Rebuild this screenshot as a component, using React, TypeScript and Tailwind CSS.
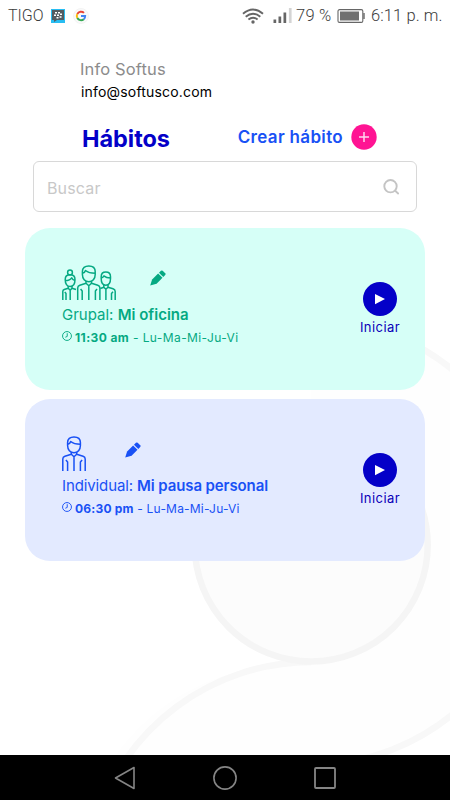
import React from "react";

const PersonIcon = ({ className }: { className: string }) => {
  return (
    <svg className={className} viewBox="0 0 24 35" fill="none" stroke="currentColor" strokeWidth="1.5" strokeLinejoin="round">
      <path d="M5.600 9.500V6.600C5.600 3 8 .9 12 .9s6.400 2.200 6.400 5.700v2.900c0 4.200-2.600 7.300-6.400 7.300s-6.400-3.100-6.400-7.300Z" />
      <path d="M5.600 8.200c1.700-.3 2.700-1.100 3.100-2.700 2.400 2 6 2.700 9.700 2.700" />
      <path d="M9.300 16.200v2L2.900 20.200Q.8 20.900.8 23v12M14.700 16.200v2l6.400 2q2.100.7 2.100 2.800v12M5.600 35V26l-1.700-2M18.400 35V26l1.700-2" />
      <path d="m9.300 18.200 2.700 2.500 2.700-2.500M12 20.700V35" />
    </svg>
  );
};

const GroupIcon = () => {
  return (
    <svg className="h-[35px] w-[54px]" viewBox="0 0 54 35" fill="none" stroke="currentColor" strokeWidth="1.5" strokeLinejoin="round">
      <circle cx="8" cy="7.500" r="2.400" />
      <path d="M3.200 14.500c0-3 1.900-4.700 4.900-4.700s4.900 1.700 4.900 4.700c0 4.300-1.800 7-4.900 7s-4.900-2.700-4.900-7ZM3.200 15.500c3.800 0 5.500-1 6.500-2.700.6 1.600 1.700 2.400 3.300 2.700" />
      <path d="M6.200 21.200v2l-4 1.300Q.8 25 .8 26.500V35M10 21.200v2l4 1.300M6.200 23.200l2 2 1.800-2M8.200 25.500V35M4 35v-6.500L2.800 27" />
      <path d="M20.400 9.500V6.600c0-3.600 2.400-5.700 6.400-5.700s6.400 2.200 6.400 5.700v2.900c0 4.200-2.600 7.300-6.400 7.300s-6.400-3.100-6.400-7.300ZM20.400 8.200c1.700-.3 2.700-1.100 3.100-2.700 2.400 2 6 2.700 9.700 2.700" />
      <path d="M24 16.200v2l-6.200 2q-2.100.7-2.100 2.800v12M29.500 16.200v2l6.300 2q2.100.7 2.100 2.800v12M20.200 35v-9l-1.600-2M33.400 35v-9l1.600-2M24 18.200l2.800 2.500 2.700-2.500M26.800 20.700V35" />
      <path d="M39.200 13.500v-1.800c0-3.200 1.700-4.700 4.600-4.700s4.700 1.500 4.700 4.700v1.800c0 4-1.800 6.700-4.700 6.700s-4.600-2.700-4.600-6.700ZM39.200 13c1.500-.3 2.300-1 2.600-2.100 1.800 1.500 4 2.100 6.700 2.100" />
      <path d="M41.800 20v2.200l-3.500 1.300M46 20v2.200l5 1.600q2.200.7 2.200 2.700V35M41.800 22.200l2.100 2 2.100-2M43.900 24.500V35M49.500 35v-6.500l1.500-1.700" />
    </svg>
  );
};

const PencilIcon = () => {
  return (
    <svg className="h-4 w-4" viewBox="0 0 16 16" fill="currentColor">
      <path d="m.2 15.600 1.900-6.200 6-6 4.400 4.400-5.900 6-6.400 1.800Z" />
      <path d="M9 2.700 10.900.8q.9-.8 1.800 0l2.500 2.500q.8.900 0 1.800L13.300 7 9 2.700Z" />
    </svg>
  );
};

const ClockIcon = () => {
  return (
    <svg className="h-[10px] w-[10px]" viewBox="0 0 9 9" fill="none" stroke="currentColor" strokeWidth=".85">
      <circle cx="4.500" cy="4.500" r="4" />
      <path d="M4.700 2v2.900L3 5.600" />
    </svg>
  );
};

const StartButton = () => {
  return (
    <button className="flex w-10 flex-col items-center text-[#0b00b9]">
      <svg className="h-[34px] w-[34px]" viewBox="0 0 34 34">
        <circle cx="17" cy="17" r="17" fill="#0400c8" />
        <path d="M12 12v10.300L22 17.100Z" fill="#fff" />
      </svg>
      <span className="mt-[2px] text-[13px] leading-[18px] tracking-[0.45px]">Iniciar</span>
    </button>
  );
};

const StatusBar = () => {
  return (
    <header className="flex h-8 items-center pl-2 font-['Roboto'] text-[16.500px] font-light text-[#3c3c3c]">
      <span className="w-[43px] text-[16px]">TIGO</span>
      <svg className="h-[14px] w-[14px]" viewBox="0 0 14 14">
        <path d="M0 0h14v14H0z" fill="#28bdf2" />
        <path d="M1 1h12v10H6l-3 2v-2H1z" fill="#555b60" />
        <path d="M4 3h2v1.500H4zM7 3h2v1.500H7zM3 5.500h2V7H3zM6 5.500h2V7H6zM9 4.500h2V6H9zM5.500 8h2v1.500h-2zM8.500 7.300h2v1.500h-2z" fill="#fff" />
      </svg>
      <svg className="ml-2 h-4 w-4" viewBox="0 0 16 16" fill="none" strokeWidth="1.900">
        <circle cx="8" cy="8" r="7.500" fill="#fafafa" stroke="#ececec" strokeWidth=".6" />
        <path d="M11 4.900A4.200 4.200 0 0 0 4.300 6" stroke="#e94335" />
        <path d="M4.300 6a4.200 4.200 0 0 0 0 4" stroke="#fbbc05" />
        <path d="M4.300 10a4.200 4.200 0 0 0 6.500 1.200" stroke="#34a853" />
        <path d="M10.800 11.200A4.200 4.200 0 0 0 12.200 8H8" stroke="#4285f4" />
      </svg>
      <svg className="ml-[153px] h-4 w-[22px]" viewBox="0 0 22 16" fill="none" stroke="#666" strokeWidth="1.900">
        <path d="M1 5.800Q11-2.800 21 5.800M3.700 8.700q7.300-6 14.600 0M6.400 11.500q4.600-3.600 9.200 0" />
        <circle cx="11" cy="14" r="1.700" fill="#666" stroke="none" />
      </svg>
      <svg className="ml-[9px] h-4 w-5" viewBox="0 0 20 16" fill="#666">
        <path d="M.500 11.500h2.700V15H.500zM5.500 8.500h2.700V15H5.500zM10.500 4.500h2.700V15h-2.700z" />
        <path d="M15.900 0h2.700v15h-2.700z" fill="#d4d4d4" />
      </svg>
      <span className="ml-[3px] w-[41px] whitespace-nowrap tracking-[0.25px]">79 %</span>
      <svg className="h-[14px] w-[28px]" viewBox="0 0 28 14" fill="none">
        <rect x="1" y=".6" width="24.800" height="12.800" rx="1.500" stroke="#666" strokeWidth="1.100" />
        <path d="M3 2.500h19v9H3z" fill="#707070" />
        <path d="M27 4v6" stroke="#666" strokeWidth="1.400" />
      </svg>
      <span className="ml-[6px] whitespace-nowrap tracking-[0.1px]">6:11 p. m.</span>
    </header>
  );
};

const App = () => {
  return (
    <div className="relative flex h-[800px] w-[450px] flex-col overflow-hidden bg-white font-['Inter',sans-serif]">
      <svg className="absolute inset-0 h-[800px] w-[450px]" viewBox="0 0 450 800" fill="none" strokeWidth="6.500">
        <path d="M311 319A223 223 0 0 1 311 765L90 800C130 710 210 662 311 662Z" fill="#fefefe" />
        <path d="M311 319a223 223 0 0 1 0 446M311 662A226 226 0 0 0 95 823" stroke="#f8f8f8" />
        <circle cx="311.200" cy="545" r="116.500" fill="#fcfcfc" stroke="#f5f5f5" />
      </svg>

      <div className="relative flex grow flex-col">
        <StatusBar />

        <section className="ml-20 mt-[26px]">
          <p className="text-[16.500px] leading-[22px] tracking-[0.15px] text-[#8c8c8c]">Info Softus</p>
          <p className="ml-[1px] mt-[2px] text-[14px] leading-5 tracking-[0.18px] text-black">info@softusco.com</p>
        </section>

        <div className="ml-[82px] mr-[73px] mt-[21px] flex h-[28px] items-center justify-between">
          <h1 className="mt-[3px] text-[23.500px] font-bold tracking-[-0.05px] text-[#0400c8]">Hábitos</h1>
          <button className="flex items-center gap-2 text-[17px] font-semibold text-[#1951f5]">
            <span className="mt-[2px] tracking-[0.33px]">Crear hábito</span>
            <svg className="h-[26px] w-[26px]" viewBox="0 0 26 26">
              <circle cx="13" cy="13" r="12.700" fill="#ff1493" />
              <path d="M13 8v10M8 13h10" stroke="#ffd5ee" strokeWidth="1.500" />
            </svg>
          </button>
        </div>

        <div className="mx-[33px] mt-[10px] flex h-[51px] items-center justify-between rounded-md border border-[#d8d8d8] bg-white pl-[13px] pr-[17px] text-[16px] text-[#c8c8c8]">
          <span className="mt-[2px] tracking-[0.15px]">Buscar</span>
          <svg className="h-4 w-4" viewBox="0 0 16 16" fill="none" stroke="#c4c4c4" strokeWidth="1.900">
            <circle cx="7.500" cy="7.200" r="6.200" />
            <path d="m11.700 11.300 4 3.700" />
          </svg>
        </div>

        <section className="mx-[25px] mt-4 flex h-[162px] rounded-[25px] bg-[#d6fff7] pl-[37px] pr-[25px] text-[#05a982]">
          <div className="grow pt-[37px]">
            <div className="flex h-[35px] items-start gap-[34px]">
              <GroupIcon />
              <div className="pt-[5px]"><PencilIcon /></div>
            </div>
            <p className="mt-1 whitespace-nowrap text-[15px] leading-[22px]">Grupal: <b className="font-semibold">Mi oficina</b></p>
            <p className="mt-[3px] flex items-center gap-[3px] whitespace-nowrap text-[12px] leading-[18px]">
              <span className="pb-1"><ClockIcon /></span>
              <span className="tracking-[0.4px]"><b>11:30 am</b> - Lu-Ma-Mi-Ju-Vi</span>
            </p>
          </div>
          <div className="pt-[54px]"><StartButton /></div>
        </section>

        <section className="mx-[25px] mt-[9px] flex h-[162px] rounded-[25px] bg-[#e3eaff] pl-[37px] pr-[25px] text-[#1951f5]">
          <div className="grow pt-[37px]">
            <div className="flex h-[35px] items-start gap-[39px]">
              <PersonIcon className="h-[35px] w-6" />
              <div className="pt-[6px]"><PencilIcon /></div>
            </div>
            <p className="mt-1 whitespace-nowrap text-[15px] leading-[22px] tracking-[-0.11px]">Individual: <b className="font-semibold">Mi pausa personal</b></p>
            <p className="mt-[3px] flex items-center gap-[3px] whitespace-nowrap text-[12px] leading-[18px]">
              <span className="pb-1"><ClockIcon /></span>
              <span className="tracking-[0.2px]"><b>06:30 pm</b> - Lu-Ma-Mi-Ju-Vi</span>
            </p>
          </div>
          <div className="pt-[54px]"><StartButton /></div>
        </section>
      </div>

      <nav className="relative flex h-[45px] items-center justify-between bg-black pl-[114px] pr-[114px]">
        <svg className="h-6 w-[22px]" viewBox="0 0 22 24" fill="none" stroke="#858585" strokeWidth="1.600" strokeLinejoin="round">
          <path d="M20 1.500v21L1.500 12Z" />
        </svg>
        <svg className="h-6 w-6" viewBox="0 0 24 24" fill="none" stroke="#858585" strokeWidth="1.600">
          <circle cx="12" cy="12" r="11.100" />
        </svg>
        <svg className="h-[22px] w-[22px]" viewBox="0 0 22 22" fill="none" stroke="#858585" strokeWidth="1.800">
          <rect x="1" y="1" width="20" height="20" rx="1" />
        </svg>
      </nav>
    </div>
  );
};

export default App;
